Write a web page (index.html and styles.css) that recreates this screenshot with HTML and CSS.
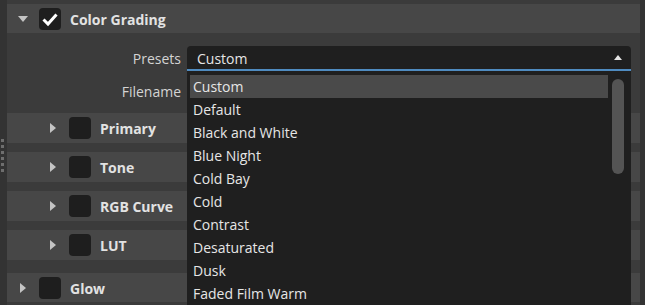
FILE: index.html
```html
<!DOCTYPE html>
<html lang="en">
<head>
    <meta charset="UTF-8">
    <meta name="viewport" content="width=device-width, initial-scale=1.0">
    <title>Color Grading</title>
    <link rel="stylesheet" href="styles.css">
</head>
<body>
    <div class="app">
        <div class="grip">
            <span></span><span></span><span></span><span></span><span></span><span></span>
        </div>
        <div class="panel">
            <div class="group-head">
                <span class="tri-down"></span>
                <span class="check">
                    <svg width="22" height="22" viewBox="0 0 22 22"><path d="M4.5 11.5 L9 16 L17.5 6.5" fill="none" stroke="#fff" stroke-width="3"/></svg>
                </span>
                <span class="title">Color Grading</span>
            </div>
            <div class="group-body">
                <div class="field">
                    <label>Presets</label>
                    <div class="select">
                        <span class="value">Custom</span>
                        <span class="tri-up"></span>
                        <div class="menu">
                            <ul>
                                <li class="selected">Custom</li>
                                <li>Default</li>
                                <li>Black and White</li>
                                <li>Blue Night</li>
                                <li>Cold Bay</li>
                                <li>Cold</li>
                                <li>Contrast</li>
                                <li>Desaturated</li>
                                <li>Dusk</li>
                                <li>Faded Film Warm</li>
                            </ul>
                            <div class="thumb"></div>
                        </div>
                    </div>
                </div>
                <div class="field field-file">
                    <label>Filename</label>
                    <div class="input"></div>
                </div>
                <div class="sub-head">
                    <span class="tri-right"></span>
                    <span class="check"></span>
                    <span class="title">Primary</span>
                </div>
                <div class="sub-head">
                    <span class="tri-right"></span>
                    <span class="check"></span>
                    <span class="title">Tone</span>
                </div>
                <div class="sub-head">
                    <span class="tri-right"></span>
                    <span class="check"></span>
                    <span class="title">RGB Curve</span>
                </div>
                <div class="sub-head last">
                    <span class="tri-right"></span>
                    <span class="check"></span>
                    <span class="title">LUT</span>
                </div>
            </div>
            <div class="group-head">
                <span class="tri-right glow-tri"></span>
                <span class="check"></span>
                <span class="title">Glow</span>
            </div>
        </div>
    </div>
</body>
</html>
```

FILE: styles.css
```css
body {
    margin: 0;
    font-family: "Open Sans", "Noto Sans", sans-serif;
    font-size: 14px;
    color: #d4d4d4;
    background-color: #333333;
    overflow: hidden;
}
.app {
    display: flex;
    height: 305px;
    overflow: hidden;
}
.grip {
    width: 7px;
    padding-top: 139px;
    display: flex;
    flex-direction: column;
    gap: 3px;
}
.grip span {
    display: block;
    width: 3px;
    height: 3px;
    margin-left: 1px;
    background-color: #6e6e6e;
}
.panel {
    flex: 1;
    margin-right: 5px;
    padding-top: 4px;
    background-color: #3b3b3b;
}
.group-head, .sub-head {
    display: flex;
    align-items: center;
    height: 29px;
    background-color: #474747;
}
.sub-head {
    height: 30px;
    margin-bottom: 9px;
}
.sub-head.last {
    margin-bottom: 13px;
}
.title {
    font-weight: bold;
    color: #e2e2e2;
    margin-left: 9px;
    padding-top: 1px;
}
.check {
    display: block;
    width: 22px;
    height: 22px;
    background-color: #1e1e1e;
    border-radius: 4px;
}
.check svg {
    display: block;
}
.tri-down {
    width: 0;
    height: 0;
    margin-left: 11px;
    margin-right: 11px;
    border-left: 5px solid transparent;
    border-right: 5px solid transparent;
    border-top: 6px solid #c4c4c4;
}
.tri-right {
    width: 0;
    height: 0;
    margin-left: 43px;
    margin-right: 13px;
    border-top: 5px solid transparent;
    border-bottom: 5px solid transparent;
    border-left: 6px solid #c4c4c4;
}
.glow-tri {
    margin-left: 13px;
    margin-right: 13px;
}
.group-body {
    padding-top: 13px;
}
.field {
    display: flex;
    height: 25px;
    margin-right: 9px;
}
.field label {
    width: 174px;
    margin-right: 6px;
    text-align: right;
    line-height: 26px;
}
.field-file {
    margin-top: 8px;
    margin-bottom: 10px;
    height: 24px;
}
.select, .input {
    flex: 1;
    position: relative;
    box-sizing: border-box;
    background-color: #1f1f1f;
}
.select {
    display: flex;
    align-items: center;
    border-radius: 4px 4px 0 0;
    border-bottom: 2px solid #4f8bc0;
}
.value {
    margin-left: 10px;
    padding-top: 1px;
    flex: 1;
    color: #e6e6e6;
}
.tri-up {
    width: 0;
    height: 0;
    margin-right: 9px;
    border-left: 4px solid transparent;
    border-right: 4px solid transparent;
    border-bottom: 5px solid #e6e6e6;
}
.menu {
    position: absolute;
    top: 100%;
    left: 0;
    right: 0;
    height: 240px;
    margin-top: 2px;
    background-color: #1f1f1f;
    overflow: hidden;
    z-index: 5;
}
.menu ul {
    list-style: none;
    margin: 0;
    padding: 4px 23px 0 3px;
}
.menu li {
    height: 23px;
    line-height: 23px;
    padding-left: 3px;
    color: #e6e6e6;
}
.menu li.selected {
    background-color: #4a4a4a;
}
.thumb {
    position: absolute;
    top: 8px;
    right: 7px;
    width: 12px;
    height: 95px;
    border-radius: 6px;
    background-color: #545454;
}
```
